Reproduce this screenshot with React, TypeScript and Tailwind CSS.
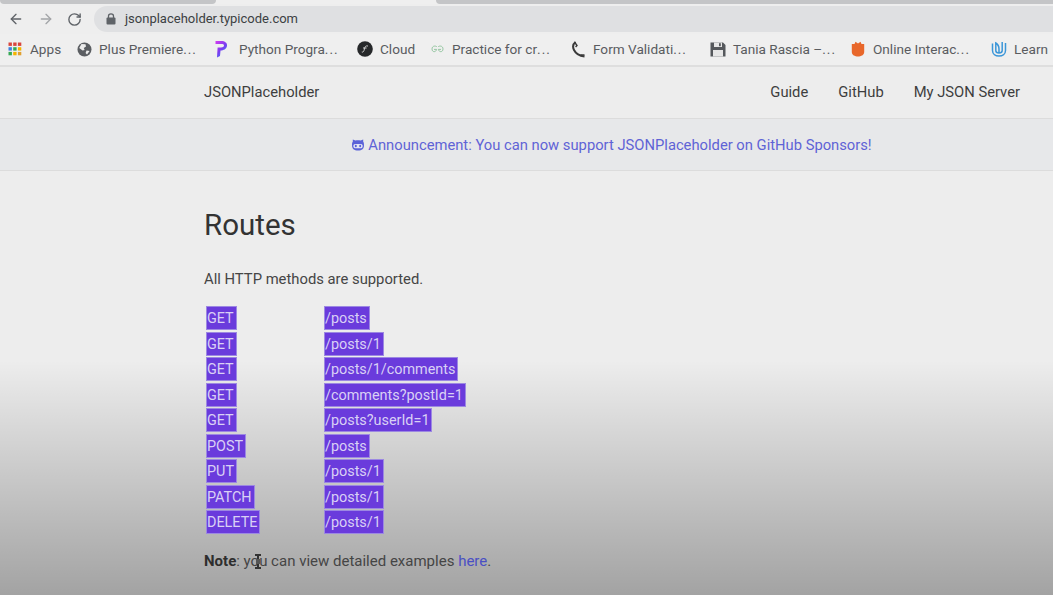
import { ArrowLeft, ArrowRight, RotateCw } from "lucide-react";
import type { ReactNode } from "react";

const font = "font-['Roboto','Noto_Sans',sans-serif]";

const AppsIcon = () => {
  const c = ["#d9463c", "#d9463c", "#d9463c", "#3f7fe0", "#34a853", "#f4b400", "#34a853", "#f4b400", "#e0a030"];
  return (
    <svg width="14" height="14" viewBox="0 0 14 14">
      {c.map((f, i) => (
        <rect key={i} x={0.5 + (i % 3) * 4.7} y={0.5 + Math.floor(i / 3) * 4.7} width="3.4" height="3.4" fill={f} />
      ))}
    </svg>
  );
};

const Globe = () => (
  <svg width="15" height="15" viewBox="0 0 15 15">
    <circle cx="7.5" cy="7.5" r="7" fill="#5b5e62" />
    <path d="M4.5 2 L8.5 2.2 L9 4.5 L6.8 6 L7.6 8 L5.6 8.6 L2.2 6 Z M9.5 8.5 L12.6 9 L10 12.6 L8.6 11 Z" fill="#ececec" />
  </svg>
);

const PyIcon = () => (
  <svg width="14" height="18" viewBox="0 0 14 18" className="relative -left-[3px]">
    <defs>
      <linearGradient id="pg" x1="0" y1="0" x2="0.8" y2="1">
        <stop offset="0" stopColor="#d63cf0" />
        <stop offset="0.55" stopColor="#7a3cf0" />
        <stop offset="1" stopColor="#2f8cf6" />
      </linearGradient>
    </defs>
    <path d="M1.5 1 H7 C11 1 13.5 3 13 6 C12.5 9 9.5 10.5 6.5 10.5 L6 16 L3 17.5 L3.6 7.6 H7 C8.8 7.6 10 6.8 10 5.6 C10 4.4 8.8 4 7.4 4 H1.5 Z" fill="url(#pg)" />
  </svg>
);

const CloudIcon = () => (
  <svg width="16" height="16" viewBox="0 0 16 16">
    <circle cx="8" cy="8" r="7.8" fill="#26282a" />
    <path d="M4.8 11 C6.4 11.6 7 10 7.4 8 C7.8 6 8.4 4.4 11 5 M6 7 H9.6" stroke="#ccc" strokeWidth="1" fill="none" />
  </svg>
);

const GfgIcon = () => (
  <svg width="13" height="8" viewBox="0 0 13 8">
    <path d="M6 2 C5 0.5 1 0.5 1 4 C1 7.5 5 7.5 5.6 4.4 H3 M7 2 C8 0.5 12 0.5 12 4 C12 7.5 8 7.5 7.4 4.4 H10" stroke="#8cc29a" strokeWidth="0.9" fill="none" />
  </svg>
);

const PhoneIcon = () => (
  <svg width="15" height="17" viewBox="0 0 15 17">
    <path d="M4.5 1 C2 3 1.5 6 3 9 C4.5 12 7.5 14.8 13.5 15.5" stroke="#3a3a3a" strokeWidth="2" fill="none" />
    <path d="M3.5 1 L6 4.5 L4.6 6 M9.5 14 L13.5 14" stroke="#3a3a3a" strokeWidth="1.4" fill="none" />
  </svg>
);

const FloppyIcon = () => (
  <svg width="16" height="15" viewBox="0 0 16 15">
    <path d="M0.5 0.5 H13 L15.5 3 V14.5 H0.5 Z" fill="#55585c" />
    <rect x="4" y="0.5" width="8" height="4.5" fill="#e6e6e6" />
    <rect x="9" y="1.2" width="1.8" height="3" fill="#55585c" />
    <rect x="3" y="8" width="10" height="6.5" fill="#e6e6e6" />
  </svg>
);

const ShieldIcon = () => (
  <svg width="14" height="16" viewBox="0 0 14 16">
    <path d="M0.8 3 L3.5 3 L4.5 0.8 L7 2.4 L9.5 0.8 L10.5 3 L13.2 3 L13.2 11 C13.2 14 10 15.5 7 15.5 C4 15.5 0.8 14 0.8 11 Z" fill="#e8672a" />
  </svg>
);

const UIcon = () => (
  <svg width="16" height="16" viewBox="0 0 16 16">
    <path d="M1.5 2.5 V9.5 C1.5 13 4.5 15 8 15 C11.5 15 14.5 13 14.5 9.5 V2 M11.2 1 V9.5 C11.2 11 10 12 8 12 C6 12 4.8 11 4.8 9.5 V2 C6.5 3 8 5 8 8 V12" stroke="#3b96d8" strokeWidth="1.5" fill="none" />
  </svg>
);

const LockIcon = () => (
  <svg width="10" height="12" viewBox="0 0 10 12">
    <rect x="0.5" y="4.5" width="9" height="7" rx="1" fill="#5f6368" />
    <path d="M2.5 5 V3 C2.5 1.5 3.6 0.8 5 0.8 C6.4 0.8 7.5 1.5 7.5 3 V5" stroke="#5f6368" strokeWidth="1.3" fill="none" />
  </svg>
);

const GithubIcon = () => (
  <svg width="14" height="12" viewBox="0 0 14 12">
    <path d="M1 6 C1 4.5 1.2 3.5 1.8 2.8 L1.8 0.5 L4.4 1.6 C6 1.2 8 1.2 9.6 1.6 L12.2 0.5 L12.2 2.8 C12.8 3.5 13 4.5 13 6 C13 10 11 11.5 7 11.5 C3 11.5 1 10 1 6 Z" fill="#5b62d8" />
    <rect x="2.4" y="5" width="9.2" height="4.2" rx="1.6" fill="#e4e5f3" />
    <ellipse cx="4.8" cy="7" rx="1" ry="1.3" fill="#5b62d8" />
    <ellipse cx="9.2" cy="7" rx="1" ry="1.3" fill="#5b62d8" />
  </svg>
);

const Bookmark = ({ icon, label, w, cut = true }: { icon: ReactNode; label: string; w: string; cut?: boolean }) => (
  <div className={`flex items-center shrink-0 gap-[7px] ${w}`}>
    <span className="flex justify-center items-center w-[16px] h-[18px] shrink-0">{icon}</span>
    <span className="whitespace-nowrap">
      {label}
      {cut && <span className="tracking-[1px]">...</span>}
    </span>
  </div>
);

const routes: [string, string][] = [
  ["GET", "/posts"],
  ["GET", "/posts/1"],
  ["GET", "/posts/1/comments"],
  ["GET", "/comments?postId=1"],
  ["GET", "/posts?userId=1"],
  ["POST", "/posts"],
  ["PUT", "/posts/1"],
  ["PATCH", "/posts/1"],
  ["DELETE", "/posts/1"],
];

const Sel = ({ children }: { children: ReactNode }) => (
  <span className="inline-block h-[22px] leading-[23px] bg-[#6a3bdc] text-[#d9d0f5] pr-[2px] whitespace-nowrap shadow-[0_0_0_1px_#9c88e2]">
    {children}
  </span>
);

export default function App() {
  return (
    <div className={`relative w-[1053px] h-[595px] overflow-hidden bg-[#ededed] text-[#454545] ${font}`}>
      {/* Video fade behind the page content */}
      <div className="absolute inset-x-0 bottom-0 h-[235px] bg-gradient-to-b from-[#00000000] to-[#00000050]" />

      <div className="relative">
        {/* Tab strip */}
        <div className="flex h-[4px] bg-[#efefef]">
          <div className="w-[216px] rounded-b bg-[#c4c5c7]" />
          <div className="w-[220px]" />
          <div className="flex-1 rounded-bl bg-[#c4c5c7]" />
        </div>

        {/* Toolbar */}
        <div className="flex items-center h-[30px] pl-[8px] bg-[#eeeeee]">
          <ArrowLeft size={16} strokeWidth={2} className="text-[#5f6368]" />
          <ArrowRight size={16} strokeWidth={2} className="ml-[14px] text-[#a3a5a8]" />
          <RotateCw size={15} strokeWidth={2.2} className="ml-[13px] text-[#5f6368]" />
          <div className="flex items-center flex-1 h-[26px] ml-[12px] pl-[12px] rounded-l-full bg-[#dfe0e2]">
            <LockIcon />
            <span className="ml-[9px] text-[13px] text-[#3c4043]">jsonplaceholder.typicode.com</span>
          </div>
        </div>

        {/* Bookmarks */}
        <div className="flex items-center h-[33px] pl-[7px] overflow-hidden text-[13.6px] text-[#5a5c5f] bg-[#efefef] border-b-2 border-[#dedede]">
          <Bookmark icon={<AppsIcon />} label="Apps" w="w-[69px]" cut={false} />
          <Bookmark icon={<Globe />} label="Plus Premiere" w="w-[140px]" />
          <Bookmark icon={<PyIcon />} label="Python Progra" w="w-[141px]" />
          <Bookmark icon={<CloudIcon />} label="Cloud" w="w-[72px]" cut={false} />
          <Bookmark icon={<GfgIcon />} label="Practice for cr" w="w-[141px]" />
          <Bookmark icon={<PhoneIcon />} label="Form Validati" w="w-[140px]" />
          <Bookmark icon={<FloppyIcon />} label="Tania Rascia –" w="w-[140px]" />
          <Bookmark icon={<ShieldIcon />} label="Online Interac" w="w-[141px]" />
          <Bookmark icon={<UIcon />} label="Learn" w="w-[62px]" cut={false} />
        </div>

        {/* Site nav */}
        <div className="flex items-center justify-between h-[52px] pl-[204px] pr-[33px] text-[14.75px] text-[#3e3e3e] border-b border-[#dcdcdc]">
          <span>JSONPlaceholder</span>
          <div className="flex gap-[30px]">
            <span>Guide</span>
            <span>GitHub</span>
            <span>My JSON Server</span>
          </div>
        </div>

        {/* Announcement */}
        <div className="flex items-center justify-center gap-[3px] h-[52px] pt-[1px] pl-[170px] text-[14.75px] text-[#5f63d6] bg-[#e7e8ea] border-b border-[#dcdcdc]">
          <GithubIcon />
          <span>Announcement: You can now support JSONPlaceholder on GitHub Sponsors!</span>
        </div>

        {/* Content */}
        <main className="pl-[204px] pt-[35px]">
          <h1 className="text-[29.5px] leading-[38px] text-[#333]">Routes</h1>
          <p className="mt-[24px] text-[14.8px] leading-[22px]">All HTTP methods are supported.</p>
          <div className="mt-[17px] pl-[3px] text-[14.4px]">
            {routes.map(([m, p], i) => (
              <div key={i} className="flex h-[25.5px]">
                <div className="w-[118px]">
                  <Sel>{m}</Sel>
                </div>
                <Sel>{p}</Sel>
              </div>
            ))}
          </div>
          <p className="mt-[13px] text-[15px] leading-[22px]">
            <strong className="font-bold text-[#2e2e2e]">Note</strong>: you can view detailed examples{" "}
            <span className="text-[#4a4fc4]">here</span>.
          </p>
        </main>
      </div>

      {/* I-beam cursor */}
      <svg className="absolute left-[253px] top-[554px]" width="10" height="15" viewBox="0 0 10 15">
        <path d="M2 1 H8 M5 1 V14 M2 14 H8" stroke="#333" strokeWidth="2" fill="none" />
        <path d="M3 5 H7 V10 H3 Z" fill="#555" />
      </svg>
    </div>
  );
}
